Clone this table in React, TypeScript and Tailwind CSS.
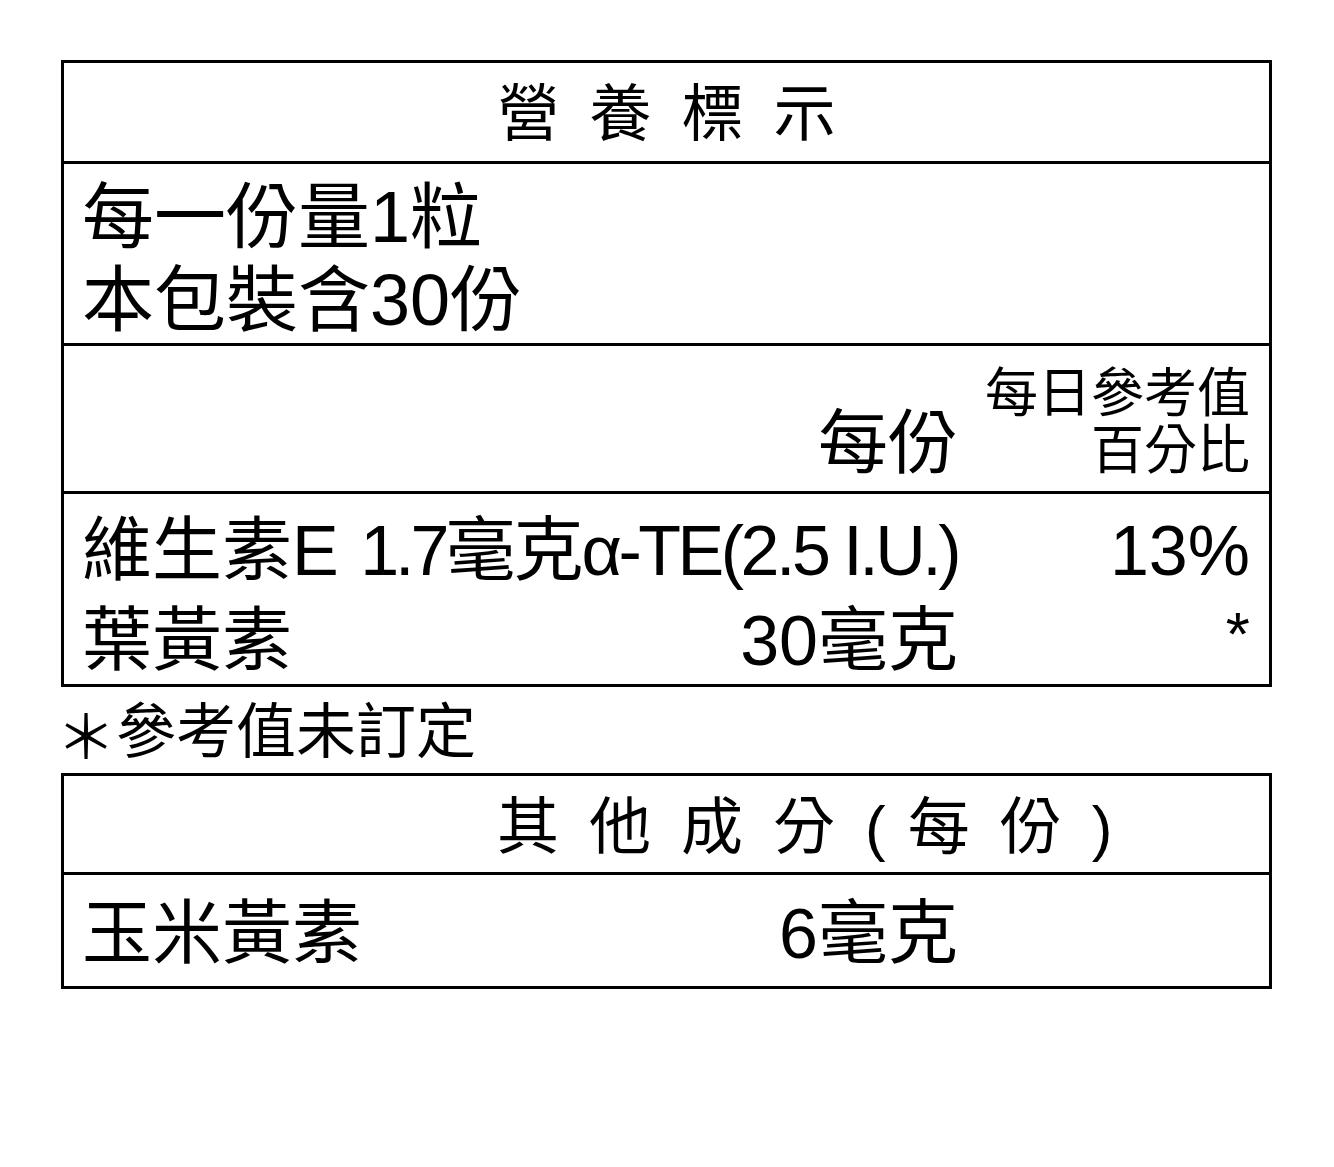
const TITLE_1 = ["營", "養", "標", "示"];

/** Two-column grid shared by the body rows: the amount column ends at ~958px,
 * the daily-value column is right aligned against the inner padding. */
const GRID = "grid grid-cols-[1fr_292px] pl-[18px] pr-[19px]";

export default function App() {
  return (
    <div className="min-h-screen bg-white text-black font-['Liberation_Sans','Noto_Sans_CJK_TC',sans-serif]">
      <div className="w-[1272px] pl-[61px] pt-[60px]">
        {/* 營養標示 */}
        <div className="border-[3px] border-black">
          <div className="flex h-[101px] items-center justify-center gap-[30px] border-b-[3px] border-black pt-[6px] text-[62px] leading-none">
            {TITLE_1.map((c) => (
              <span key={c}>{c}</span>
            ))}
          </div>

          <div className="h-[182px] border-b-[3px] border-black pl-[18px] pt-[12px] text-[72px] leading-[83px]">
            <div>每一份量1粒</div>
            <div>本包裝含30份</div>
          </div>

          <div className={`${GRID} h-[148px] items-end border-b-[3px] border-black pb-[12px]`}>
            <div className="text-right text-[70px] leading-none">每份</div>
            <div className="text-right text-[53px] leading-[57px]">
              <div>每日參考值</div>
              <div>百分比</div>
            </div>
          </div>

          <div className={`${GRID} h-[190px] pt-[12px] text-[70px] leading-[90px]`}>
            <div className="flex justify-between">
              <span>維生素E</span>
              <span>
                <span className="tracking-[-4px]">1.7</span>
                <span className="tracking-[-2px]">毫克</span>
                <span className="tracking-[-3.5px]">α-TE(2.5 I.U.)</span>
              </span>
            </div>
            <div className="text-right">13%</div>
            <div className="flex justify-between">
              <span>葉黃素</span>
              <span>30毫克</span>
            </div>
            <div className="text-right">
              <span className="relative -top-[10px] text-[62px]">*</span>
            </div>
          </div>
        </div>

        <div className="flex h-[86px] items-center pt-[6px] text-[60px] leading-none">
          <span className="-ml-[5px] font-['Noto_Sans_CJK_TC',sans-serif]">＊</span>
          <span>參考值未訂定</span>
        </div>

        {/* 其他成分 */}
        <div className="border-[3px] border-black">
          <div className="flex h-[99px] items-center gap-[30px] border-b-[3px] border-black pl-[433px] pt-[8px] text-[62px] leading-none">
            <span>其</span>
            <span>他</span>
            <span>成</span>
            <span>分</span>
            <span className="-mr-[8px]">(</span>
            <span>每</span>
            <span>份</span>
            <span>)</span>
          </div>
          <div className={`${GRID} h-[111px] items-center pt-[6px] text-[70px] leading-none`}>
            <div className="flex justify-between">
              <span>玉米黃素</span>
              <span>6毫克</span>
            </div>
            <div />
          </div>
        </div>
      </div>
    </div>
  );
}
